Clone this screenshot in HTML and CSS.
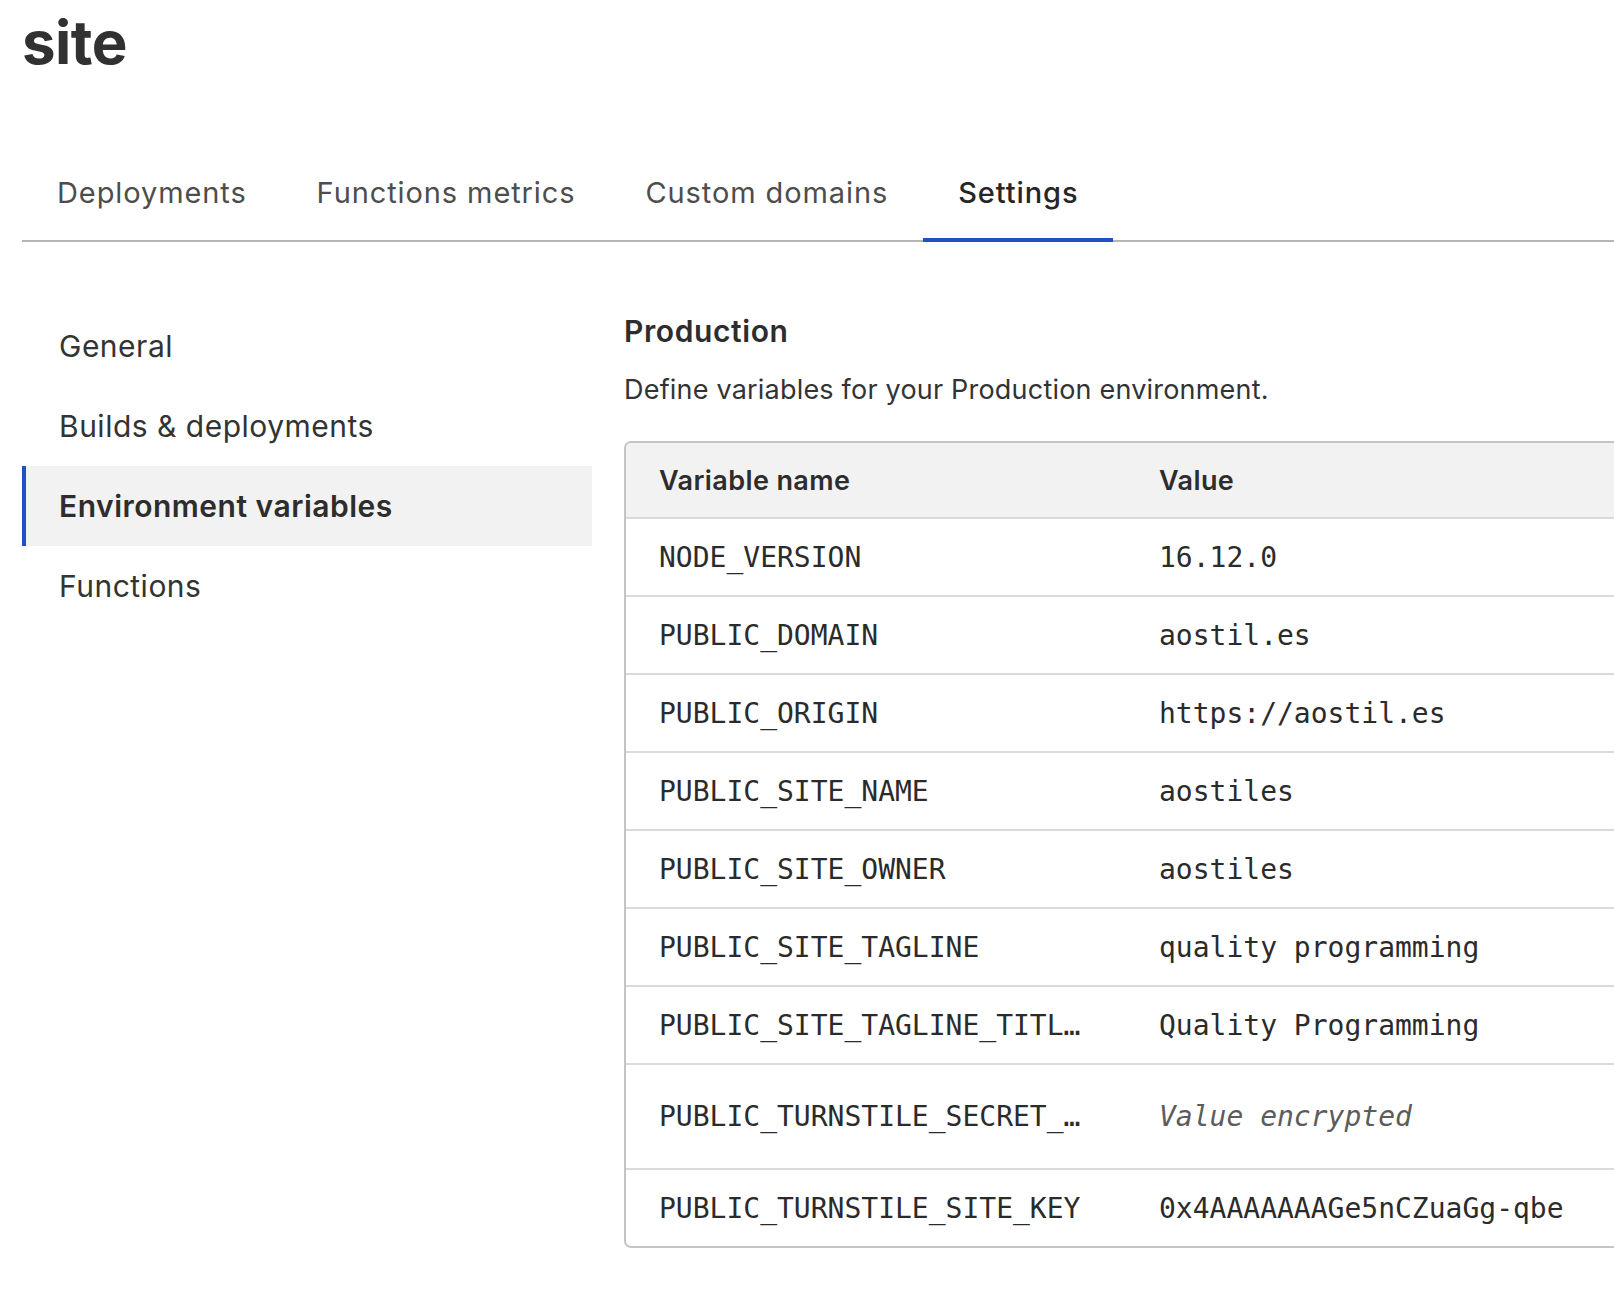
FILE: index.html
```html
<!DOCTYPE html>
<html lang="en">
<head>
<meta charset="utf-8">
<title>site – Settings</title>
<link rel="stylesheet" href="styles.css">
</head>
<body>
<div class="page">
  <h1 class="title">site</h1>
  <nav class="tabs">
    <a class="tab">Deployments</a>
    <a class="tab">Functions metrics</a>
    <a class="tab">Custom domains</a>
    <a class="tab active">Settings</a>
  </nav>
  <div class="layout">
    <aside class="sidenav">
      <a class="side-item">General</a>
      <a class="side-item">Builds &amp; deployments</a>
      <a class="side-item active">Environment variables</a>
      <a class="side-item">Functions</a>
    </aside>
    <main class="content">
      <h2 class="section-title">Production</h2>
      <p class="section-desc">Define variables for your Production environment.</p>
      <div class="table-wrap">
        <table class="vars">
          <colgroup><col class="col-name"><col class="col-value"></colgroup>
          <thead>
            <tr><th>Variable name</th><th>Value</th></tr>
          </thead>
          <tbody>
            <tr><td class="name">NODE_VERSION</td><td class="value">16.12.0</td></tr>
            <tr><td class="name">PUBLIC_DOMAIN</td><td class="value">aostil.es</td></tr>
            <tr><td class="name">PUBLIC_ORIGIN</td><td class="value">https://aostil.es</td></tr>
            <tr><td class="name">PUBLIC_SITE_NAME</td><td class="value">aostiles</td></tr>
            <tr><td class="name">PUBLIC_SITE_OWNER</td><td class="value">aostiles</td></tr>
            <tr><td class="name">PUBLIC_SITE_TAGLINE</td><td class="value">quality programming</td></tr>
            <tr><td class="name">PUBLIC_SITE_TAGLINE_TITL…</td><td class="value">Quality Programming</td></tr>
            <tr class="tall"><td class="name">PUBLIC_TURNSTILE_SECRET_…</td><td class="value encrypted">Value encrypted</td></tr>
            <tr><td class="name">PUBLIC_TURNSTILE_SITE_KEY</td><td class="value">0x4AAAAAAAGe5nCZuaGg-qbe</td></tr>
          </tbody>
        </table>
      </div>
    </main>
  </div>
</div>
</body>
</html>
```
FILE: styles.css
```css
html, body {
  margin: 0;
  padding: 0;
  background: #ffffff;
  overflow: hidden;
}

body {
  font-family: Inter, "Noto Sans", "Liberation Sans", sans-serif;
  color: #333333;
}

.page {
  padding: 0 0 0 22px;
  width: 1800px;
}

.title {
  margin: 0;
  padding-top: 10px;
  font-size: 60px;
  line-height: 64px;
  font-weight: 700;
  color: #313131;
  letter-spacing: -0.5px;
}

.tabs {
  display: flex;
  margin-top: 102px;
  border-bottom: 2px solid #b5b5b5;
}

.tab {
  display: block;
  padding: 0 35px 28px;
  font-size: 29px;
  line-height: 34px;
  color: #4d4d4d;
  margin-bottom: -2px;
  border-bottom: 4px solid transparent;
  letter-spacing: 0.9px;
}

.tab.active {
  color: #262626;
  font-weight: 500;
  border-bottom-color: #1f51c2;
}

.layout {
  display: flex;
  margin-top: 64px;
}

.sidenav {
  width: 570px;
  flex: none;
  display: flex;
  flex-direction: column;
}

.side-item {
  display: flex;
  align-items: center;
  height: 80px;
  padding-left: 33px;
  font-size: 30px;
  color: #333333;
  border-left: 4px solid transparent;
  letter-spacing: 0.5px;
}

.side-item.active {
  background: #f2f2f2;
  border-left-color: #1f51c2;
  font-weight: 600;
  color: #2d2d2d;
}

.content {
  margin-left: 32px;
  flex: none;
}

.section-title {
  margin: 5px 0 0;
  font-size: 30px;
  line-height: 40px;
  font-weight: 600;
  color: #2d2d2d;
  letter-spacing: 0.6px;
}

.section-desc {
  margin: 22px 0 0;
  font-size: 27px;
  line-height: 34px;
  color: #333333;
  letter-spacing: 0.2px;
}

.table-wrap {
  margin-top: 34px;
  width: 1160px;
  border: 2px solid #c4c4c4;
  border-radius: 7px;
  overflow: hidden;
}

.vars {
  width: 100%;
  border-collapse: collapse;
  table-layout: fixed;
}

.col-name { width: 500px; }

.vars th {
  background: #f2f2f2;
  text-align: left;
  height: 74px;
  padding: 0 33px;
  font-size: 27px;
  font-weight: 600;
  color: #2d2d2d;
  letter-spacing: 0.4px;
}

.vars td {
  height: 76px;
  padding: 0 33px;
  border-top: 2px solid #dadada;
  font-family: "DejaVu Sans Mono", "Liberation Mono", monospace;
  font-size: 28px;
  color: #2b2b2b;
  white-space: nowrap;
  overflow: hidden;
  text-overflow: ellipsis;
}

.vars tr.tall td {
  height: 103px;
}

.vars td.encrypted {
  font-style: italic;
  color: #5c5c5c;
}
```
